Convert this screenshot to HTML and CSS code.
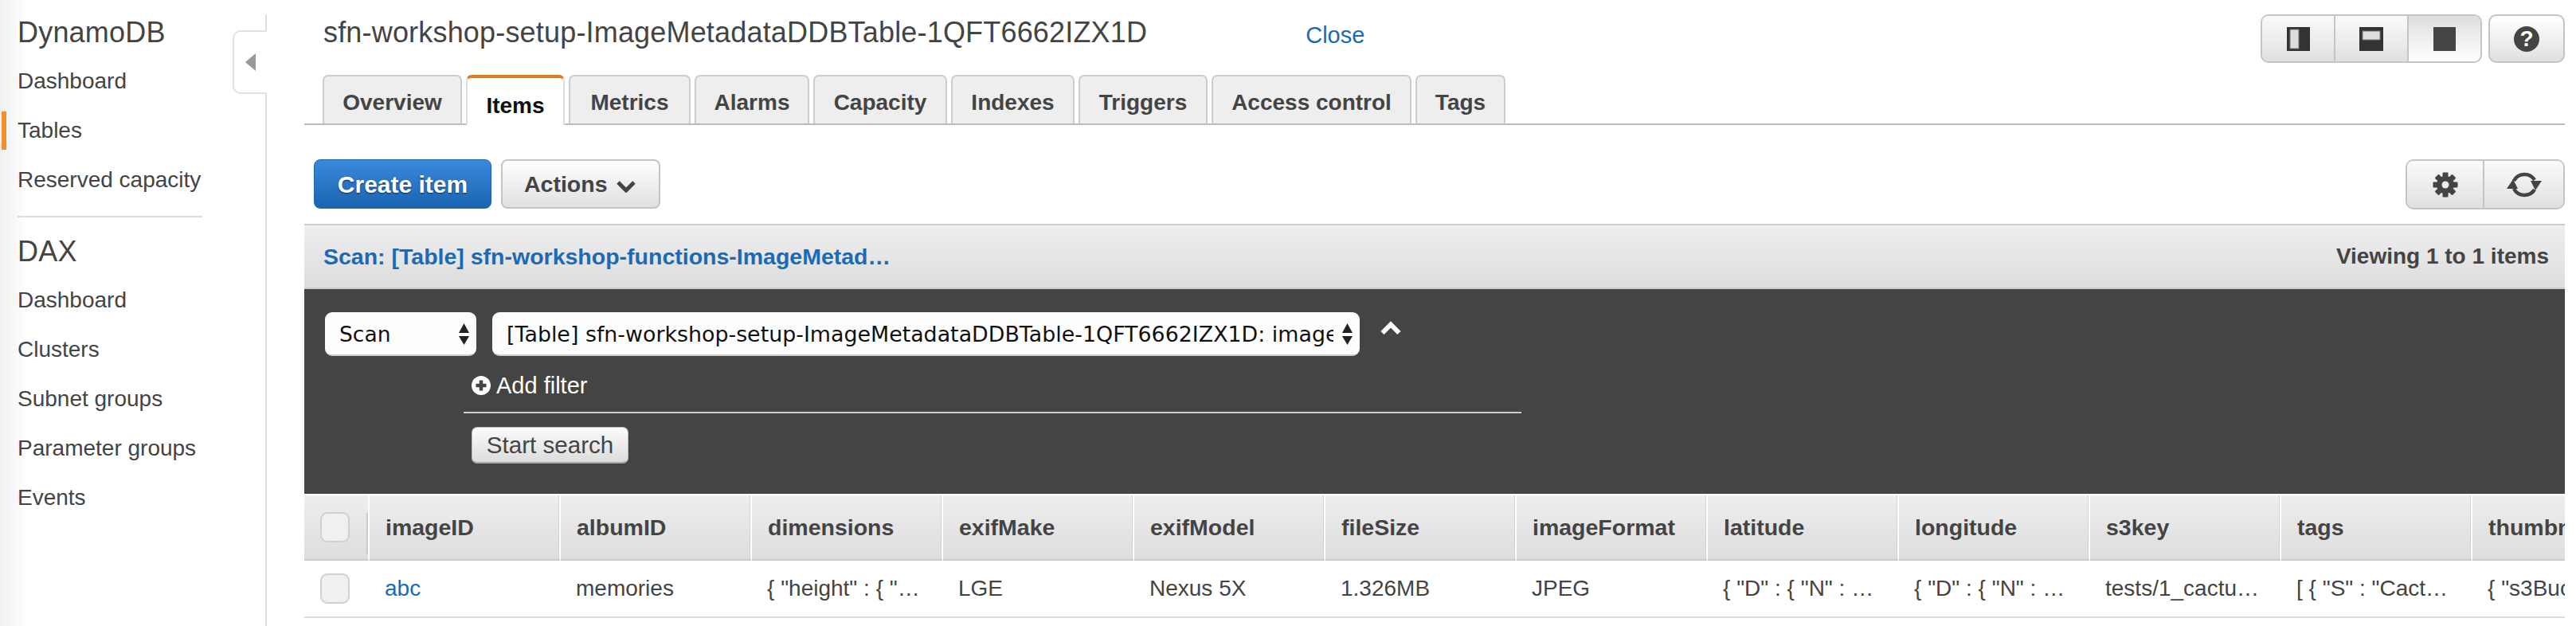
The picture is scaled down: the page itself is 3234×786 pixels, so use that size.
FILE: index.html
```html
<!DOCTYPE html>
<html lang="en">
<head>
<meta charset="utf-8">
<title>DynamoDB</title>
<link rel="stylesheet" href="styles.css">
</head>
<body>
<div class="app">
  <aside class="sidebar">
    <div class="side-inner">
      <h2 class="side-title">DynamoDB</h2>
      <nav class="side-nav">
        <a class="side-link">Dashboard</a>
        <a class="side-link is-active">Tables</a>
        <a class="side-link">Reserved capacity</a>
      </nav>
      <hr class="side-rule">
      <h2 class="side-title side-title-dax">DAX</h2>
      <nav class="side-nav">
        <a class="side-link">Dashboard</a>
        <a class="side-link">Clusters</a>
        <a class="side-link">Subnet groups</a>
        <a class="side-link">Parameter groups</a>
        <a class="side-link">Events</a>
      </nav>
    </div>
    <div class="side-toggle"><span class="side-arrow"></span></div>
  </aside>

  <main class="main">
    <header class="topbar">
      <h1 class="page-title">sfn-workshop-setup-ImageMetadataDDBTable-1QFT6662IZX1D</h1>
      <a class="close-link">Close</a>
      <div class="top-actions">
        <div class="btn-group view-group">
          <button class="seg seg-a"><svg width="29" height="30" viewBox="0 0 29 30"><rect width="29" height="30" fill="#333"/><rect x="4" y="3" width="11" height="24" fill="#ddd" stroke="#777"/></svg></button>
          <button class="seg seg-b"><svg width="30" height="30" viewBox="0 0 30 30"><rect width="30" height="30" fill="#333"/><rect x="4" y="5" width="22" height="11" fill="#ddd" stroke="#777"/></svg></button>
          <button class="seg seg-c is-pressed"><svg width="28" height="30" viewBox="0 0 28 30"><rect width="28" height="30" fill="#444"/></svg></button>
        </div>
        <button class="btn-group help-btn"><span class="help-icon">?</span></button>
      </div>
    </header>

    <div class="tabs">
      <a class="tab">Overview</a>
      <a class="tab is-active">Items</a>
      <a class="tab">Metrics</a>
      <a class="tab">Alarms</a>
      <a class="tab">Capacity</a>
      <a class="tab">Indexes</a>
      <a class="tab">Triggers</a>
      <a class="tab">Access control</a>
      <a class="tab">Tags</a>
    </div>

    <div class="toolbar">
      <button class="btn-primary">Create item</button>
      <button class="btn-actions">Actions<svg class="chev" width="26" height="16" viewBox="0 0 26 16"><path d="M3 3 L13 13 L23 3" fill="none" stroke="#444" stroke-width="5"/></svg></button>
      <div class="btn-group tool-group">
        <button class="seg seg-gear">
          <svg width="32" height="32" viewBox="0 0 32 32">
            <g fill="#444">
              <circle cx="16" cy="16" r="11"/>
              <rect x="12.5" y="0.5" width="7" height="31" rx="1"/>
              <rect x="12.5" y="0.5" width="7" height="31" rx="1" transform="rotate(45 16 16)"/>
              <rect x="12.5" y="0.5" width="7" height="31" rx="1" transform="rotate(90 16 16)"/>
              <rect x="12.5" y="0.5" width="7" height="31" rx="1" transform="rotate(135 16 16)"/>
            </g>
            <circle cx="16" cy="16" r="4.5" fill="#eee"/>
          </svg>
        </button>
        <button class="seg seg-refresh">
          <svg width="44" height="36" viewBox="0 0 44 36">
            <path d="M9 13 A15 15 0 0 1 35 12" fill="none" stroke="#444" stroke-width="4.5"/>
            <path d="M35 24 A15 15 0 0 1 9 23" fill="none" stroke="#444" stroke-width="4.5"/>
            <polygon points="30,13 44,13 36,25" fill="#444"/>
            <polygon points="0,23 14,23 8,11" fill="#444"/>
          </svg>
        </button>
      </div>
    </div>

    <div class="scan-head">
      <a class="scan-link">Scan: [Table] sfn-workshop-functions-ImageMetad…</a>
      <span class="scan-count">Viewing 1 to 1 items</span>
    </div>

    <section class="query">
      <div class="query-row">
        <div class="select select-mode">
          <span class="select-text">Scan</span>
          <svg class="updown" width="13" height="27" viewBox="0 0 13 27"><polygon points="6.5,0 13,12 0,12" fill="#222"/><polygon points="0,16 13,16 6.5,27" fill="#222"/></svg>
        </div>
        <div class="select select-table">
          <span class="select-text">[Table] sfn-workshop-setup-ImageMetadataDDBTable-1QFT6662IZX1D: imageID</span>
          <svg class="updown" width="13" height="27" viewBox="0 0 13 27"><polygon points="6.5,0 13,12 0,12" fill="#222"/><polygon points="0,16 13,16 6.5,27" fill="#222"/></svg>
        </div>
        <svg class="collapse" width="26" height="18" viewBox="0 0 26 18"><path d="M2.5 15 L13 4.5 L23.5 15" fill="none" stroke="#fff" stroke-width="6"/></svg>
      </div>
      <div class="filter-area">
        <div class="add-filter">
          <svg width="24" height="24" viewBox="0 0 24 24"><circle cx="12" cy="12" r="12" fill="#fff"/><path d="M12 5.5 V18.5 M5.5 12 H18.5" stroke="#444" stroke-width="4.5"/></svg>
          <span>Add filter</span>
        </div>
        <button class="btn-search">Start search</button>
      </div>
    </section>

    <table class="items">
      <thead>
        <tr>
          <th class="col-check"><span class="check"></span></th>
          <th>imageID</th><th>albumID</th><th>dimensions</th><th>exifMake</th><th>exifModel</th><th>fileSize</th><th>imageFormat</th><th>latitude</th><th>longitude</th><th>s3key</th><th>tags</th><th>thumbnail</th>
        </tr>
      </thead>
      <tbody>
        <tr>
          <td class="col-check"><span class="check"></span></td>
          <td><a class="cell-link">abc</a></td><td>memories</td><td>{ "height" : { "…</td><td>LGE</td><td>Nexus 5X</td><td>1.326MB</td><td>JPEG</td><td>{ "D" : { "N" : …</td><td>{ "D" : { "N" : …</td><td>tests/1_cactu…</td><td>[ { "S" : "Cact…</td><td>{ "s3Bucket…</td>
        </tr>
      </tbody>
    </table>
  </main>
</div>
</body>
</html>
```

FILE: styles.css
```css
* { box-sizing: border-box; }
html, body { margin: 0; padding: 0; background: #fff; }
body {
  font-family: "Liberation Sans", Arial, sans-serif;
  font-size: 28px;
  color: #444;
}
button { font-family: inherit; margin: 0; padding: 0; cursor: pointer; }
.app { display: flex; width: 3234px; height: 786px; overflow: hidden; }

/* sidebar */
.sidebar {
  position: relative;
  flex: 0 0 335px;
  padding-top: 18px;
  background: linear-gradient(to right, #f1f1f1 0, #fff 36px);
}
.side-inner { height: 100%; border-right: 2px solid #ddd; padding-left: 22px; }
.side-title { margin: 0; font-size: 36px; font-weight: 400; line-height: 46px; color: #444; letter-spacing: 0.2px; }
.side-title-dax { margin-top: 20px; }
.side-nav { display: flex; flex-direction: column; margin-top: 7px; }
.side-link { position: relative; display: block; height: 62px; line-height: 62px; font-size: 28px; color: #444; }
.side-link.is-active::before {
  content: "";
  position: absolute;
  left: -20px;
  top: 7px;
  width: 6px;
  height: 48px;
  background: #f0902b;
}
.side-rule { width: 232px; height: 2px; margin: 14px 0 0; border: 0; background: #ddd; }
.side-toggle {
  position: absolute;
  top: 38px;
  right: 0;
  width: 43px;
  height: 80px;
  background: #fff;
  border: 2px solid #e2e2e2;
  border-right: 0;
  border-radius: 10px 0 0 10px;
  display: flex;
  align-items: center;
  padding-left: 14px;
}
.side-arrow { width: 0; height: 0; border-style: solid; border-width: 11px 13px 11px 0; border-color: transparent #999 transparent transparent; }

/* main */
.main { flex: 0 0 2838px; margin-left: 47px; overflow: hidden; }
.topbar { display: flex; align-items: flex-start; height: 94px; padding: 18px 0 0 24px; }
.page-title { margin: 0; font-size: 36px; font-weight: 400; line-height: 46px; color: #444; letter-spacing: 0.18px; white-space: nowrap; }
.close-link { margin-left: 199px; font-size: 29px; line-height: 52px; color: #1a6ab5; }
.top-actions { display: flex; gap: 8px; margin-left: auto; }

.btn-group {
  display: flex;
  height: 61px;
  border: 2px solid #c4c4c4;
  border-radius: 10px;
  overflow: hidden;
  background: linear-gradient(to bottom, #fff, #e0e0e0);
}
.seg {
  display: flex;
  align-items: center;
  justify-content: center;
  border: 0;
  border-right: 2px solid #c4c4c4;
  background: linear-gradient(to bottom, #fafafa, #e0e0e0);
  padding: 0;
}
.seg:last-child { border-right: 0; }
.seg.is-pressed { background: linear-gradient(to bottom, #dedede, #fff); }
.view-group { width: 278px; }
.seg-a { width: 92px; }
.seg-b { width: 92px; }
.seg-c { flex: 1; }
.help-btn { width: 96px; align-items: center; justify-content: center; padding: 0; }
.help-icon {
  display: block;
  width: 32px;
  height: 32px;
  border-radius: 50%;
  background: #444;
  color: #fff;
  font-weight: 700;
  font-size: 28px;
  line-height: 32px;
  text-align: center;
}

/* tabs */
.tabs {
  display: grid;
  grid-template-columns: 175px 124px 153px 144px 168px 155px 162px 251px 113px;
  column-gap: 5px;
  height: 63px;
  padding-left: 23px;
  border-bottom: 2px solid #bbb;
}
.tab {
  display: block;
  height: 61px;
  background: #eee;
  border: 2px solid #ccc;
  border-bottom: 0;
  border-radius: 7px 7px 0 0;
  text-align: center;
  font-weight: 700;
  font-size: 28px;
  line-height: 66px;
  color: #444;
}
.tab.is-active {
  height: 63px;
  background: #fff;
  border-color: #ddd;
  border-top: 4px solid #e07b20;
  line-height: 70px;
  color: #111;
}

/* toolbar */
.toolbar { display: flex; align-items: flex-start; height: 62px; margin-top: 43px; padding-left: 12px; }
.btn-primary {
  width: 223px;
  height: 62px;
  padding-top: 2px;
  border: 1px solid #1b66b3;
  border-radius: 8px;
  background: linear-gradient(to bottom, #3a89dc, #1a64b0);
  color: #fff;
  font-weight: 700;
  font-size: 30px;
  text-shadow: 0 1px 2px rgba(0, 0, 0, .6);
}
.btn-actions {
  display: flex;
  align-items: center;
  width: 200px;
  height: 62px;
  margin-left: 12px;
  padding-left: 27px;
  border: 2px solid #c4c4c4;
  border-radius: 8px;
  background: linear-gradient(to bottom, #fff, #e0e0e0);
  color: #444;
  font-weight: 700;
  font-size: 28.5px;
}
.chev { margin-left: 10px; margin-top: 5px; }
.tool-group { width: 200px; height: 63px; margin-left: auto; }
.seg-gear { width: 97px; }
.seg-refresh { flex: 1; }

/* scan header */
.scan-head {
  display: flex;
  align-items: center;
  justify-content: space-between;
  height: 82px;
  margin-top: 19px;
  padding: 0 20px 0 24px;
  border-top: 2px solid #ccc;
  border-bottom: 2px solid #ccc;
  background: linear-gradient(to bottom, #eee, #ddd);
  font-weight: 700;
  font-size: 28px;
}
.scan-link { color: #1a6ab5; font-size: 28.5px; }
.scan-count { color: #444; }

/* query panel */
.query { height: 257px; padding: 29px 0 0 26px; background: #444; }
.query-row { display: flex; align-items: flex-start; gap: 20px; }
.select {
  display: flex;
  align-items: center;
  justify-content: space-between;
  height: 55px;
  padding: 2px 9px 0 18px;
  background: #fdfdfd;
  border-bottom: 2px solid #ccc;
  border-radius: 9px;
  font-family: "DejaVu Sans", sans-serif;
  font-size: 26.5px;
  color: #111;
}
.select-mode { width: 190px; }
.select-table { width: 1089px; font-size: 26.85px; }
.select-text { white-space: nowrap; overflow: hidden; }
.select-table .select-text { width: 1038px; }
.collapse { margin: 11px 0 0 6px; }
.filter-area { width: 1328px; margin-left: 174px; }
.add-filter {
  display: flex;
  align-items: center;
  gap: 7px;
  margin-top: 20px;
  padding: 0 0 16px 10px;
  border-bottom: 2px solid #ccc;
  color: #fff;
  font-size: 29px;
  box-sizing: content-box;
  height: 34px;
}
.btn-search {
  display: block;
  width: 197px;
  height: 46px;
  margin: 17px 0 0 10px;
  padding-top: 1px;
  border: 1px solid #bbb;
  border-bottom: 2px solid #aaa;
  border-radius: 7px;
  background: linear-gradient(to bottom, #fbfbfb, #dcdcdc);
  color: #444;
  font-size: 29.6px;
}

/* table */
.items { table-layout: fixed; width: 2961px; border-collapse: separate; border-spacing: 0; margin-top: 2px; }
.items th, .items td { width: 240px; padding: 0 0 0 20px; text-align: left; white-space: nowrap; overflow: hidden; }
.items td { padding-left: 19px; }
.items th {
  height: 82px;
  border-bottom: 2px solid #ccc;
  border-right: 2px solid #fff;
  box-shadow: inset -1px 0 0 #d2d2d2;
  background: linear-gradient(to bottom, #eee, #ddd);
  font-weight: 700;
  font-size: 28.5px;
  color: #444;
}
.items td {
  height: 72px;
  border-bottom: 2px solid #ddd;
  font-size: 28px;
  color: #444;
}
.items .col-check { width: 82px; padding: 0 0 0 20px; }
.items th.col-check { position: relative; box-shadow: none; }
.items th.col-check::after {
  content: "";
  position: absolute;
  right: 0;
  top: 22px;
  width: 2px;
  height: 52px;
  background: #ccc;
}
.check {
  display: block;
  width: 37px;
  height: 38px;
  border: 2px solid #d0d0d0;
  border-radius: 9px;
  background: #f0f0f0;
}
.cell-link { color: #1a6ab5; }
```
